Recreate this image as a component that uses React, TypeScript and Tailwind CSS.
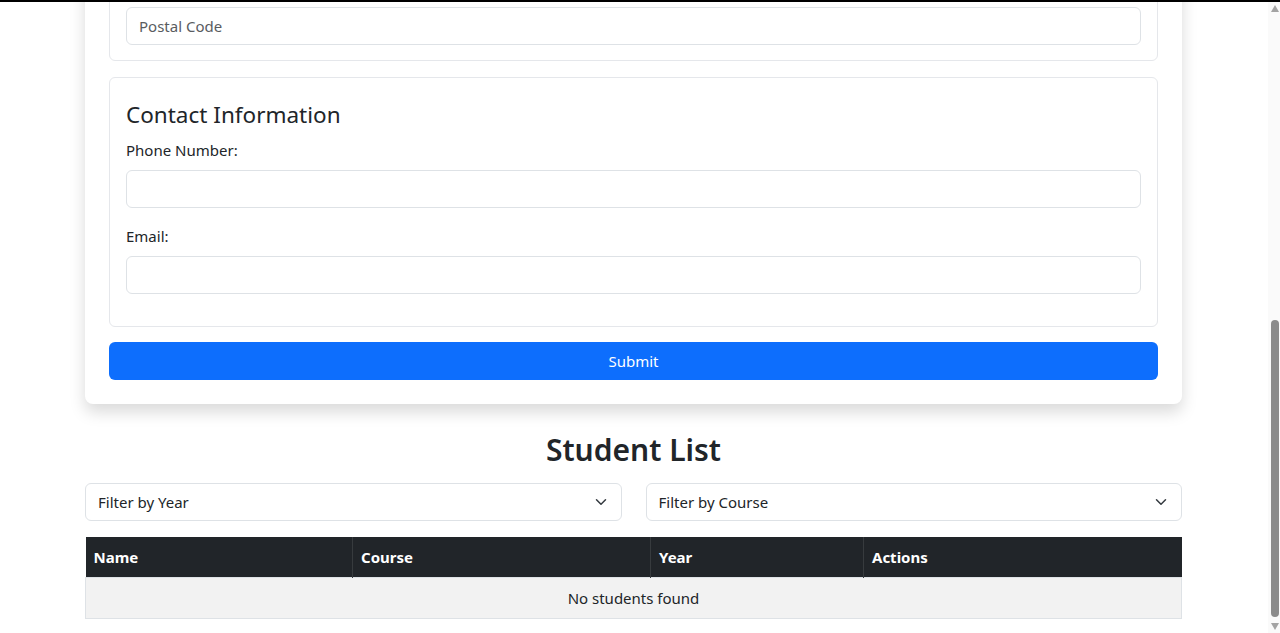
import React from "react";

function Chevron() {
  return (
    <svg width="16" height="12" viewBox="0 0 16 16" className="shrink-0">
      <path d="m2 5 6 6 6-6" fill="none" stroke="#343a40" strokeWidth="2" strokeLinecap="round" strokeLinejoin="round" />
    </svg>
  );
}

function Select({ label }: { label: string }) {
  return (
    <div className="flex-1 h-[38px] border border-[#dee2e6] rounded-[6px] flex items-center justify-between pl-[12px] pr-[12px] text-[15px] text-[#212529] bg-white">
      <span>{label}</span>
      <Chevron />
    </div>
  );
}

function Input({ placeholder }: { placeholder?: string }) {
  return (
    <div className="h-[38px] border border-[#dee2e6] rounded-[6px] flex items-center px-[12px] text-[15px] text-[#595c5f] bg-white">
      {placeholder}
    </div>
  );
}

function Scrollbar() {
  return (
    <div className="w-[12px] shrink-0 bg-[#fafafa] flex flex-col items-center">
      <svg width="8" height="7" viewBox="0 0 8 7" className="mt-[3px] ml-[2px]">
        <polygon points="4,0 8,7 0,7" fill="#a3a3a3" />
      </svg>
      <div className="mt-[308px] ml-[2px] w-[8px] h-[297px] rounded-full bg-[#8b8b8b]" />
      <svg width="8" height="7" viewBox="0 0 8 7" className="mt-[6px] ml-[2px]">
        <polygon points="0,0 8,0 4,7" fill="#a3a3a3" />
      </svg>
    </div>
  );
}

export default function App() {
  return (
    <div className="w-[1280px] h-[633px] overflow-hidden bg-white flex flex-col font-['Noto_Sans',sans-serif] text-[#212529]">
      <div className="h-[2px] bg-black shrink-0" />
      <div className="flex flex-1 min-h-0">
        <main className="flex-1 overflow-hidden">
          <div className="w-[1097px] ml-[85px] -mt-[40px] bg-white rounded-[8px] shadow-[0_8px_16px_rgba(0,0,0,0.15)] p-[24px]">
            <section className="border border-[#e5e7eb] rounded-[6px] px-[16px] pt-[20px] pb-[15px]">
              <Input placeholder="Postal Code" />
            </section>
            <section className="mt-[16px] border border-[#e5e7eb] rounded-[6px] px-[16px] pt-[22px] pb-[16px]">
              <h4 className="text-[22.5px] leading-[29px] mb-[9px] font-normal">Contact Information</h4>
              <div className="mb-[16px]">
                <label className="block text-[15px] leading-[24px] mb-[8px]">Phone Number:</label>
                <Input />
              </div>
              <div className="mb-[16px]">
                <label className="block text-[15px] leading-[24px] mb-[8px]">Email:</label>
                <Input />
              </div>
            </section>
            <button className="mt-[15px] w-full h-[38px] rounded-[6px] bg-[#0d6efd] text-white text-[15px] flex items-center justify-center">
              Submit
            </button>
          </div>

          <div className="w-[1097px] ml-[85px]">
            <h2 className="mt-[27px] mb-[14px] text-[30px] leading-[38px] font-semibold text-center">Student List</h2>
            <div className="flex gap-[24px]">
              <Select label="Filter by Year" />
              <Select label="Filter by Course" />
            </div>
            <table className="mt-[16px] w-full border-collapse text-[15px]">
              <thead>
                <tr className="bg-[#212529] text-white">
                  <th className="w-[267px] text-left font-bold px-[8px] py-[8px] leading-[24px] border-r border-[#373b3e]">Name</th>
                  <th className="w-[298px] text-left font-bold px-[8px] py-[8px] leading-[24px] border-r border-[#373b3e]">Course</th>
                  <th className="w-[213px] text-left font-bold px-[8px] py-[8px] leading-[24px] border-r border-[#373b3e]">Year</th>
                  <th className="text-left font-bold px-[8px] py-[8px] leading-[24px]">Actions</th>
                </tr>
              </thead>
              <tbody>
                <tr>
                  <td colSpan={4} className="bg-[#f2f2f2] text-center px-[8px] py-[8px] leading-[24px] border border-[#dee2e6]">
                    No students found
                  </td>
                </tr>
              </tbody>
            </table>
          </div>
        </main>
        <Scrollbar />
      </div>
    </div>
  );
}
